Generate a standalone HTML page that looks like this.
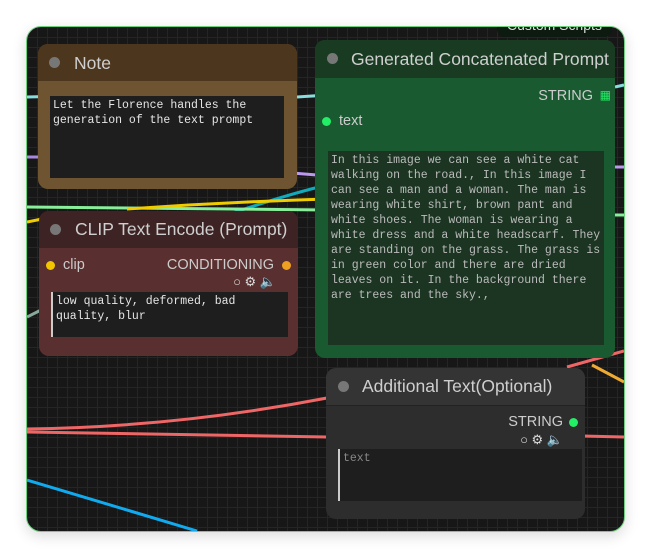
<!DOCTYPE html><html><head><style>
body{margin:0;width:650px;height:557px;background:#fff;position:relative;overflow:hidden;font-family:"Liberation Sans",sans-serif}
#f{position:absolute;left:26px;top:26px;width:597px;height:504px;border:1px solid #6fcf7f;border-radius:15px;overflow:hidden;background-color:#171717;background-image:linear-gradient(#252525 1px,transparent 1px),linear-gradient(90deg,#252525 1px,transparent 1px);background-size:10px 10px;box-shadow:0 4px 14px rgba(0,0,0,.15)}
.n{position:absolute;border-radius:10px;overflow:hidden}
.h{position:absolute;left:0;right:0;top:0;font-size:17.5px;color:#cfcfcf}
.dot{position:absolute;width:11px;height:11px;border-radius:50%;background:#777}
.ta{position:absolute;font-family:"Liberation Mono",monospace;font-size:11.5px;line-height:15px;white-space:pre;padding:2px 3px}
.lbl{position:absolute;font-size:14.5px;color:#ccc}
.ic{position:absolute;font-size:13px;color:#ddd}
</style></head><body>
<div id="f">
<svg width="597" height="504" style="position:absolute;left:0;top:0">
<path d="M0 70 L40 69" stroke="#8dd" stroke-width="3"/>
<path d="M270 70 L300 68" stroke="#8dd" stroke-width="3"/>
<path d="M0 130 L15 130" stroke="#a8d" stroke-width="3"/>
<path d="M265 146 L290 148" stroke="#b9e" stroke-width="3"/>
<path d="M180 195 Q250 170 300 158" stroke="#1ab" stroke-width="3" fill="none"/>
<path d="M0 180 L300 183" stroke="#8e9" stroke-width="3"/>
<path d="M100 182 Q200 175 300 172" stroke="#ec0" stroke-width="3" fill="none"/>
<path d="M0 195 L15 192" stroke="#ec0" stroke-width="3"/>
<path d="M0 290 L20 280" stroke="#8a9" stroke-width="3"/>
<path d="M0 402 Q150 400 300 371" stroke="#e66" stroke-width="3" fill="none"/>
<path d="M0 405 L300 410" stroke="#e66" stroke-width="3"/>
<path d="M555 409 L597 410" stroke="#e66" stroke-width="3"/>
<path d="M540 340 L597 324" stroke="#e66" stroke-width="3"/>
<path d="M565 338 L597 355" stroke="#ea3" stroke-width="3"/>
<path d="M0 453 L170 504" stroke="#1ae" stroke-width="3"/>
<path d="M588 60 L597 58" stroke="#8dd" stroke-width="3"/>
<path d="M588 140 L597 140" stroke="#b9e" stroke-width="3"/>
<path d="M588 188 L597 188" stroke="#8e9" stroke-width="3"/>
</svg>
<div style="position:absolute;left:470px;top:-10px;width:115px;height:20px;background:#0c1a10;border-radius:8px;color:#ddd;font-size:14px;text-align:center">Custom Scripts</div>
<div class="n" style="left:11px;top:17px;width:259px;height:145px;background:#6e5430">
<div class="h" style="height:37px;background:#4c361e"><div class="dot" style="left:11px;top:13px"></div><span style="position:absolute;left:36px;top:9px">Note</span></div>
<div class="ta" style="left:12px;top:52px;width:228px;height:78px;background:#1e1e1e;color:#e6e6e6">Let the Florence handles the
generation of the text prompt</div></div>
<div class="n" style="left:12px;top:184px;width:259px;height:145px;background:#5a2f2f">
<div class="h" style="height:37px;background:#3d2323"><div class="dot" style="left:11px;top:13px"></div><span style="position:absolute;left:36px;top:8px">CLIP Text Encode (Prompt)</span></div>
<div class="dot" style="left:7px;top:50px;width:9px;height:9px;background:#f2c500"></div><span class="lbl" style="left:24px;top:46px">clip</span>
<span class="lbl" style="right:24px;top:46px">CONDITIONING</span><div class="dot" style="right:7px;top:50px;width:9px;height:9px;background:#f0a020"></div>
<span class="ic" style="right:22px;top:63px">○ ⚙ 🔈</span>
<div class="ta" style="left:12px;top:81px;width:229px;height:41px;background:#1e1e1e;color:#e6e6e6;border-left:2px solid #ccc">low quality, deformed, bad
quality, blur</div></div>
<div class="n" style="left:288px;top:13px;width:300px;height:318px;background:#1a5a30">
<div class="h" style="height:38px;background:#183b22"><div class="dot" style="left:12px;top:13px"></div><span style="position:absolute;left:36px;top:9px">Generated Concatenated Prompt</span></div>
<span class="lbl" style="right:22px;top:48px">STRING</span><span style="position:absolute;right:4px;top:48px;color:#2e6;font-size:12px">▦</span>
<div class="dot" style="left:7px;top:77px;width:9px;height:9px;background:#2e6"></div><span class="lbl" style="left:24px;top:73px">text</span>
<div class="ta" style="left:13px;top:111px;width:270px;height:190px;background:#1c3523;color:#bbb">In this image we can see a white cat
walking on the road., In this image I
can see a man and a woman. The man is
wearing white shirt, brown pant and
white shoes. The woman is wearing a
white dress and a white headscarf. They
are standing on the grass. The grass is
in green color and there are dried
leaves on it. In the background there
are trees and the sky.,</div></div>
<div class="n" style="left:299px;top:341px;width:259px;height:151px;background:#2d2d2d">
<div class="h" style="height:37px;background:#343434;border-bottom:1px solid #222"><div class="dot" style="left:12px;top:13px"></div><span style="position:absolute;left:36px;top:8px">Additional Text(Optional)</span></div>
<span class="lbl" style="right:22px;top:46px">STRING</span><div class="dot" style="right:7px;top:50px;width:9px;height:9px;background:#2e6"></div>
<span class="ic" style="right:22px;top:64px">○ ⚙ 🔈</span>
<div class="ta" style="left:12px;top:81px;width:236px;height:48px;background:#1e1e1e;color:#888;border-left:2px solid #ccc">text</div></div>
</div>
</body></html>
